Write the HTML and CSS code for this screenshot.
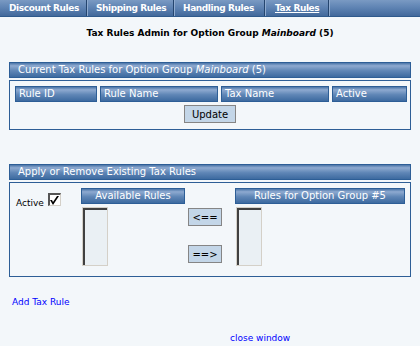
FILE: index.html
```html
<!DOCTYPE html>
<html lang="en">
<head>
    <meta charset="UTF-8">
    <title>Tax Rules Admin</title>
    <link rel="stylesheet" href="styles.css">
</head>
<body>
    <!-- Top tabs -->
    <div class="tabs">
        <a class="tab">Discount Rules</a>
        <a class="tab">Shipping Rules</a>
        <a class="tab">Handling Rules</a>
        <a class="tab current">Tax Rules</a>
    </div>

    <h2 class="title">Tax Rules Admin for Option Group <i>Mainboard</i> (5)</h2>

    <!-- Current rules -->
    <div class="panel first">
        <div class="bar">Current Tax Rules for Option Group <i>Mainboard</i> (5)</div>
        <div class="box">
            <div class="cols">
                <div class="bar cell">Rule ID</div>
                <div class="bar cell">Rule Name</div>
                <div class="bar cell">Tax Name</div>
                <div class="bar cell">Active</div>
            </div>
            <div class="center"><button class="btn">Update</button></div>
        </div>
    </div>

    <!-- Apply / remove -->
    <div class="panel second">
        <div class="bar">Apply or Remove Existing Tax Rules</div>
        <div class="box assign">
            <div class="active">Active <span class="check"><svg width="9" height="9" viewBox="0 0 9 9"><path d="M0 4 L2 4 L3 6 L7 0 L9 0 L3 9 Z" fill="#000"/></svg></span></div>
            <div class="list-col">
                <div class="bar cell mid">Available Rules</div>
                <div class="listbox"></div>
            </div>
            <div class="move">
                <button class="btn arrow">&lt;==</button>
                <button class="btn arrow">==&gt;</button>
            </div>
            <div class="list-col">
                <div class="bar cell mid">Rules for Option Group #5</div>
                <div class="listbox"></div>
            </div>
        </div>
    </div>

    <a class="link add">Add Tax Rule</a>
    <div class="closer"><a class="link">close window</a></div>
</body>
</html>
```

FILE: styles.css
```css
body {
    margin: 0;
    background: #f3f7fa;
    font-family: "DejaVu Sans", Verdana, sans-serif;
    font-size: 10px;
    color: #000;
}
.tabs {
    display: flex;
    height: 16px;
    background: linear-gradient(#7a9ac3, #5d82b2 50%, #42699b);
    border-bottom: 1px solid #2f5a8c;
    white-space: nowrap;
}
.tab {
    color: #fff;
    font-size: 9px;
    font-weight: bold;
    letter-spacing: -0.4px;
    line-height: 16px;
    width: 87px;
    box-sizing: border-box;
    padding-left: 9px;
    border-right: 1px solid #24456e;
    box-shadow: 1px 0 0 #8fabcf;
}
.tab:nth-child(3) {
    width: 91px;
}
.tab.current {
    width: 64px;
    padding-left: 10px;
    text-decoration: underline;
}
.title {
    font-size: 9px;
    text-align: center;
    margin: 10px 0 0;
    line-height: 13px;
}
.panel {
    margin: 0 9px;
}
.panel.first {
    margin-top: 22px;
}
.panel.second {
    margin-top: 34px;
}
.bar {
    height: 16px;
    box-sizing: border-box;
    border: 1px solid #2d5e96;
    background: linear-gradient(#4b75a8, #8eaad0 20%, #5f86b6 55%, #3d6aa0);
    color: #fff;
    line-height: 14px;
    padding-left: 8px;
}
.box {
    margin-top: 2px;
    border: 1px solid #2d5e96;
}
.cols {
    display: grid;
    grid-template-columns: 82px 118px 108px 75px;
    gap: 3px;
    padding: 5px 0 0 5px;
}
.cell {
    padding-left: 3px;
}
.center {
    display: flex;
    justify-content: center;
    padding: 3px 0 6px;
}
.btn {
    font-family: "DejaVu Sans", Verdana, sans-serif;
    font-size: 10px;
    color: #000;
    background: #c3d6e8;
    border: 1px solid #858585;
    height: 18px;
    padding: 0 7px;
}
.assign {
    display: flex;
    height: 88px;
    padding: 5px 0 0;
}
.active {
    width: 65px;
    padding: 5px 0 0 6px;
    display: flex;
    align-items: flex-start;
    gap: 4px;
    font-size: 9px;
    line-height: 20px;
}
.check {
    width: 13px;
    height: 13px;
    box-sizing: border-box;
    border: 2px solid #555;
    border-right: 1px solid #d4d0c8;
    border-bottom: 1px solid #d4d0c8;
    background: #fff;
    display: flex;
    align-items: center;
    justify-content: center;
}
.list-col .mid {
    text-align: center;
    padding: 0;
}
.list-col:nth-of-type(2) {
    width: 104px;
}
.list-col:nth-of-type(4) {
    width: 170px;
}
.listbox {
    width: 26px;
    height: 59px;
    box-sizing: border-box;
    margin: 3px 0 0 1px;
    border: 1px solid #d4d0c8;
    box-shadow: inset 2px 2px 0 #404040;
    background: #eaf0f4;
}
.move {
    width: 50px;
    display: flex;
    flex-direction: column;
    align-items: flex-start;
    gap: 19px;
    padding: 20px 0 0 3px;
    box-sizing: border-box;
}
.arrow {
    width: 34px;
    padding: 0;
}
.link {
    color: #0000ff;
    font-size: 9px;
    text-decoration: none;
}
.add {
    display: block;
    margin: 20px 0 0 12px;
}
.closer {
    margin-top: 25px;
    padding-left: 230px;
}
```
